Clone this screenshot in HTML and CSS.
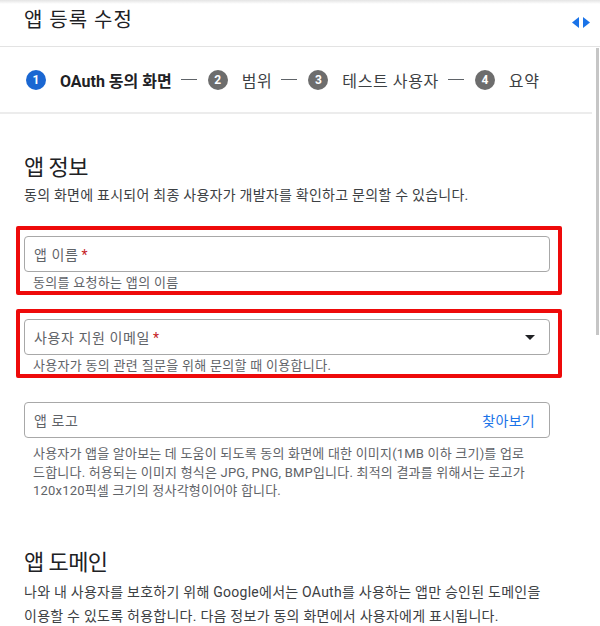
FILE: index.html
```html
<!DOCTYPE html>
<html lang="ko">

<head>
    <meta charset="UTF-8">
    <meta name="viewport" content="width=device-width, initial-scale=1.0">
    <title>앱 등록 수정</title>
    <link rel="stylesheet" href="styles.css">
</head>

<body>
    <header class="topbar">
        <h1 class="title">앱 등록 수정</h1>
        <svg class="toggle" width="18" height="11" viewBox="0 0 18 11">
            <path d="M7 0 L0 5.5 L7 11 Z" fill="#1a73e8" />
            <path d="M11 0 L18 5.5 L11 11 Z" fill="#1a73e8" />
        </svg>
    </header>

    <div class="frame">
        <div class="content">
            <ol class="stepper">
                <li class="step active"><span class="num">1</span><span class="label">OAuth 동의 화면</span></li>
                <li class="sep"></li>
                <li class="step"><span class="num">2</span><span class="label">범위</span></li>
                <li class="sep"></li>
                <li class="step"><span class="num">3</span><span class="label">테스트 사용자</span></li>
                <li class="sep"></li>
                <li class="step"><span class="num">4</span><span class="label">요약</span></li>
            </ol>

            <main class="form">
                <section class="block">
                    <h2>앱 정보</h2>
                    <p class="desc">동의 화면에 표시되어 최종 사용자가 개발자를 확인하고 문의할 수 있습니다.</p>

                    <div class="field marked first">
                        <div class="box"><span class="ph">앱 이름<span class="req">*</span></span></div>
                        <div class="hint">동의를 요청하는 앱의 이름</div>
                    </div>

                    <div class="field marked second">
                        <div class="box"><span class="ph">사용자 지원 이메일<span class="req">*</span></span><span class="caret"></span></div>
                        <div class="hint">사용자가 동의 관련 질문을 위해 문의할 때 이용합니다.</div>
                    </div>

                    <div class="field">
                        <div class="box"><span class="ph">앱 로고</span><span class="browse">찾아보기</span></div>
                        <div class="hint long">사용자가 앱을 알아보는 데 도움이 되도록 동의 화면에 대한 이미지(1MB 이하 크기)를 업로드합니다. 허용되는 이미지 형식은 JPG, PNG, BMP입니다. 최적의 결과를 위해서는 로고가 120x120픽셀 크기의 정사각형이어야 합니다.</div>
                    </div>
                </section>

                <section class="block">
                    <h2 class="domain">앱 도메인</h2>
                    <p class="desc wide">나와 내 사용자를 보호하기 위해 Google에서는 OAuth를 사용하는 앱만 승인된 도메인을 이용할 수 있도록 허용합니다. 다음 정보가 동의 화면에서 사용자에게 표시됩니다.</p>
                </section>
            </main>
        </div>
        <div class="scroll"><div class="thumb"></div></div>
    </div>
</body>

</html>
```

FILE: styles.css
```css
* {
    box-sizing: border-box;
}

body {
    margin: 0;
    height: 626px;
    overflow: hidden;
    background: #fff;
    color: #202124;
    font-family: Roboto, "Noto Sans CJK KR", sans-serif;
}

.topbar {
    height: 47px;
    padding: 6px 10px 0 24px;
    display: flex;
    justify-content: space-between;
    align-items: flex-start;
    border-bottom: 1px solid #e3e3e3;
    background: linear-gradient(#e4e4e4, #fff 4px);
}

.title {
    margin: 0;
    font-size: 20px;
    font-weight: 400;
    line-height: 28px;
    letter-spacing: 1px;
}

.toggle {
    margin-top: 11px;
}

.frame {
    display: flex;
}

.content {
    width: 592px;
}

.scroll {
    width: 8px;
    padding: 1px 0 0 4px;
}

.thumb {
    width: 3px;
    height: 287px;
    background: #c6c6c6;
}

/* stepper */

.stepper {
    list-style: none;
    margin: 0;
    height: 67px;
    padding: 0 0 0 26px;
    display: flex;
    align-items: center;
    border-bottom: 2px solid #ececec;
}

.step {
    display: flex;
    align-items: center;
    gap: 14px;
    font-size: 16px;
    color: #3c4043;
    letter-spacing: 0.6px;
}

.num {
    width: 20px;
    height: 20px;
    border-radius: 50%;
    background: #6d6d6d;
    color: #fff;
    font-size: 12px;
    font-weight: 700;
    letter-spacing: 0;
    display: flex;
    align-items: center;
    justify-content: center;
}

.step.active .num {
    background: #1a67d2;
}

.step.active .label {
    font-weight: 700;
    color: #202124;
    letter-spacing: 0;
}

.sep {
    width: 16px;
    height: 1px;
    margin: 0 11px 0 9px;
    background: #5f6368;
}

/* form */

.form {
    padding: 0 0 0 24px;
    width: 550px;
}

.block h2 {
    margin: 38px 0 0;
    font-size: 22px;
    font-weight: 400;
    line-height: 32px;
    letter-spacing: -0.6px;
}

.block h2.domain {
    margin-top: 46px;
}

.desc {
    margin: 1px 0 0;
    font-size: 14px;
    line-height: 20px;
    color: #3c4043;
    letter-spacing: 0.25px;
}

.desc.wide {
    width: 522px;
    margin-top: 1px;
    line-height: 24px;
}

.field {
    position: relative;
    margin-top: 27px;
}

.field.first {
    margin-top: 31px;
}

.field.marked::after {
    content: "";
    position: absolute;
    top: -10px;
    left: -8px;
    right: -12px;
    bottom: -3px;
    border: 4px solid #ee0a0a;
    border-radius: 2px;
}

.box {
    height: 36px;
    padding: 0 14px 0 9px;
    display: flex;
    align-items: center;
    justify-content: space-between;
    border: 1px solid #a8a8a8;
    border-radius: 4px;
}

.ph {
    font-size: 14px;
    color: #5f6368;
    letter-spacing: 0.6px;
}

.req {
    color: #c5221f;
    margin-left: 3px;
}

.caret {
    width: 0;
    height: 0;
    border-left: 5px solid transparent;
    border-right: 5px solid transparent;
    border-top: 5px solid #202124;
}

.browse {
    font-size: 14px;
    color: #1a73e8;
    letter-spacing: 0.3px;
}

.hint {
    margin-top: 2px;
    padding: 0 20px 0 9px;
    font-size: 13px;
    line-height: 18px;
    color: #5f6368;
    letter-spacing: 0.3px;
}

.hint.long {
    margin-top: 7px;
    padding-right: 14px;
    line-height: 18.5px;
    letter-spacing: 0.2px;
}
```
